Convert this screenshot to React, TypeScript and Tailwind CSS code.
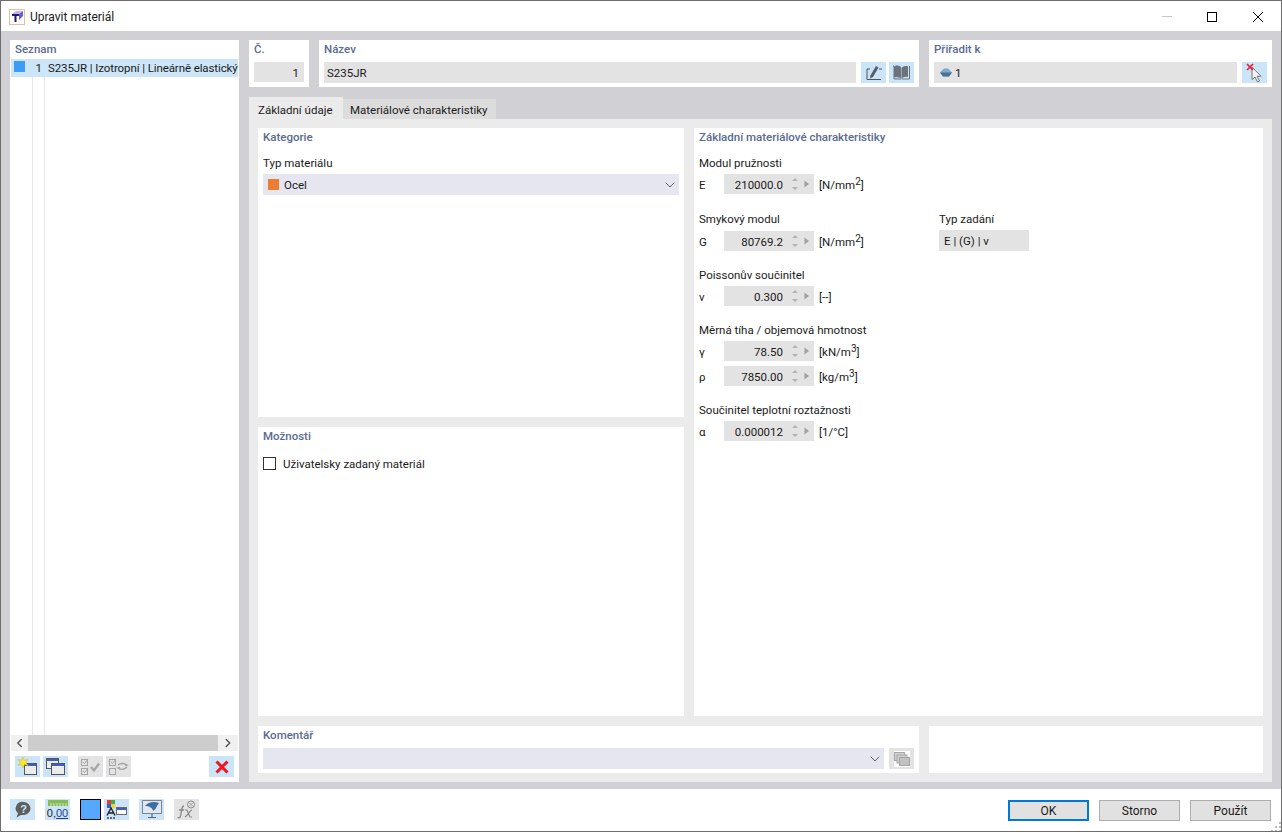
import type { ReactNode } from 'react'
import { ChevronDown, ChevronLeft, ChevronRight } from 'lucide-react'

const Title = ({ children }: { children: ReactNode }) => (
  <div className="h-[18px] leading-[19px] font-medium text-[#5b6a90]">{children}</div>
)

function IconBtn({ children, off }: { children: ReactNode; off?: boolean }) {
  return (
    <div className={`w-[25px] h-[21px] flex items-center justify-center shrink-0 ${off ? 'bg-[#e3e3e3]' : 'bg-[#cbe4f8]'}`}>
      {children}
    </div>
  )
}

function Spin({ value, symbol, unit }: { value: string; symbol: string; unit: ReactNode }) {
  return (
    <div className="flex items-center h-5">
      <span className="w-[25px] mt-px">{symbol}</span>
      <div className="w-[90px] h-5 bg-[#e3e3e3] flex items-center">
        <span className="w-[59px] text-right mt-px">{value}</span>
        <svg width="31" height="20" viewBox="0 0 31 20">
          <path d="M9 7l3-3 3 3zM9 13l3 3 3-3z" fill="#b4b4b4" />
          <path d="M21.500 6.500l4.500 3.500-4.500 3.500z" fill="#a0a0a0" />
        </svg>
      </div>
      <span className="ml-[5px] mt-px">{unit}</span>
    </div>
  )
}

const Sup = ({ children }: { children: ReactNode }) => (
  <span className="text-[10px] leading-none align-[4px]">{children}</span>
)

function TitleIcon() {
  return (
    <svg width="16" height="16" viewBox="0 0 16 16">
      <rect x="0.500" y="0.500" width="15" height="15" fill="#fff" stroke="#e0c39a" />
      <path d="M3 5l4-3h7l-4 3z" fill="#c2b4ee" />
      <path d="M10 5l4-3v5l-4 4z" fill="#6a5bd0" />
      <path d="M3 5h7v2H7.500v6h-2V7H3z" fill="#1c1c70" />
    </svg>
  )
}

function NewIcon() {
  return (
    <svg width="21" height="19" viewBox="0 0 21 19">
      <rect x="7.500" y="6.500" width="12" height="11" fill="#ececec" stroke="#555" />
      <rect x="8" y="7" width="11" height="2" fill="#3f5fc4" />
      <path d="M6 0l1.400 3.400L11 2.500 8.800 5.500 11 8.500 7.400 7.600 6 11 4.600 7.600 1 8.500 3.200 5.500 1 2.500l3.600.9z" fill="#f8ea2a" stroke="#c9b03a" strokeWidth="0.500" />
    </svg>
  )
}

function CopyIcon() {
  return (
    <svg width="21" height="19" viewBox="0 0 21 19">
      <rect x="1.500" y="1.500" width="12" height="10" fill="#ececec" stroke="#555" />
      <rect x="2" y="2" width="11" height="2" fill="#3f5fc4" />
      <rect x="6.500" y="6.500" width="13" height="11" fill="#ececec" stroke="#555" />
      <rect x="7" y="7" width="12" height="2" fill="#3f5fc4" />
    </svg>
  )
}

function CheckAllIcon() {
  return (
    <svg width="20" height="17" viewBox="0 0 20 17" fill="none" stroke="#a5a5a5">
      <rect x="0.500" y="1.500" width="6" height="6" />
      <rect x="0.500" y="10.500" width="6" height="6" />
      <path d="M2 4l1.500 1.500L7 1M2 13l1.500 1.500L7 10" />
      <path d="M10 9l3 3.500 5-7" strokeWidth="2.200" />
    </svg>
  )
}

function CheckSwapIcon() {
  return (
    <svg width="20" height="17" viewBox="0 0 20 17" fill="none" stroke="#a5a5a5">
      <rect x="0.500" y="1.500" width="6" height="6" />
      <rect x="0.500" y="10.500" width="6" height="6" />
      <path d="M2 4l1.500 1.500L7 1" />
      <path d="M9 7c3-2 6-2 9 0l-2 .5M18 9c-3 3-6 3-9 1l2-.5" strokeWidth="1.400" />
    </svg>
  )
}

function DeleteIcon() {
  return (
    <svg width="14" height="14" viewBox="0 0 14 14">
      <path d="M1.500 1.500l11 11M12.500 1.500l-11 11" stroke="#f0141e" strokeWidth="3" />
    </svg>
  )
}

function EditIcon() {
  return (
    <svg width="18" height="16" viewBox="0 0 18 16" fill="none">
      <path d="M5 4H2v10.500h14" stroke="#4b5560" />
      <path d="M11 1l2.500 1.500L8 12l-3 1.500.4-3z" fill="#56606c" />
      <path d="M14 4h3" stroke="#4b5560" />
    </svg>
  )
}

function BookIcon() {
  return (
    <svg width="17" height="15" viewBox="0 0 17 15">
      <path d="M0 1h1v13h7V2.500C6 .5 3 .5 1.500 1.500V12c2-.5 4-.2 5 .8" fill="none" stroke="#6a737c" />
      <path d="M2 1.500c2-.8 4-.5 6 1v10.500c-2-1-4-1.500-6-1z" fill="#6a737c" />
      <path d="M15 1.500c-2-.8-4-.5-6 1v10.500c2-1 4-1.500 6-1z" fill="#6a737c" />
      <path d="M16.500 1v13H9" fill="none" stroke="#6a737c" />
    </svg>
  )
}

function PickIcon() {
  return (
    <svg width="20" height="20" viewBox="0 0 20 20">
      <path d="M7 4v12.500l3-2.500 2.500 5 2-1-2.500-4.700h4z" fill="#f4f4f4" stroke="#777" />
      <path d="M2 1l6 6M8 1L2 7" stroke="#f01428" strokeWidth="1.500" />
    </svg>
  )
}

function SurfaceIcon() {
  return (
    <svg width="12" height="9" viewBox="0 0 12 9">
      <path d="M0 4.500L4 0.500h4l4 4-3 4H3z" fill="#7fa8d0" />
      <path d="M0 4.500L12 4.500 9 8.500H3z" fill="#4c7297" />
    </svg>
  )
}

function HelpIcon() {
  return (
    <svg width="18" height="17" viewBox="0 0 18 17">
      <path d="M9.500 1a7 6.500 0 0 1 0 13H7l-4.500 2.500L4 12.300A6.500 6.500 0 0 1 9.500 1z" fill="#5f5f5f" />
      <text x="9.500" y="11.500" textAnchor="middle" fontSize="11" fontWeight="700" fill="#cbe4f8" fontFamily="Liberation Sans, sans-serif">?</text>
    </svg>
  )
}

function UnitIcon() {
  return (
    <div className="w-[22px] flex flex-col items-center">
      <svg width="22" height="7" viewBox="0 0 22 7" className="block">
        <rect x="1" y="0" width="20" height="6" fill="#86bb5a" />
        <path d="M4 3v3M7 3v3M10 3v3M13 3v3M16 3v3M19 3v3" stroke="#d2e8c0" />
      </svg>
      <span className="text-[11px] leading-[12px] font-['Liberation_Sans',sans-serif] text-[#222]">
        0,<span className="underline text-[#1f3f8f]">00</span>
      </span>
    </div>
  )
}

function StyleIcon() {
  return (
    <svg width="21" height="19" viewBox="0 0 21 19">
      <rect x="1" y="0" width="4" height="4" fill="#e53a2f" />
      <rect x="5" y="0" width="4" height="4" fill="#3fae49" />
      <rect x="1" y="4" width="4" height="4" fill="#2f62d9" />
      <rect x="5" y="4" width="4" height="4" fill="#f2d431" />
      <path d="M1 15.500L5 8l4 7.500M2.500 13h5" fill="none" stroke="#222" strokeWidth="1.400" />
      <path d="M1 18h2M4 18h2M7 18h2" stroke="#444" strokeWidth="1.500" />
      <rect x="10.500" y="7.500" width="10" height="7" fill="#fff" stroke="#6a6a6a" />
      <rect x="11" y="8" width="9" height="2" fill="#3f5fc4" />
    </svg>
  )
}

function ViewIcon() {
  return (
    <svg width="20" height="19" viewBox="0 0 20 19">
      <rect x="0.500" y="0.500" width="19" height="13" fill="#dfe8f0" stroke="#7a8692" />
      <path d="M3 6c3-4 9-5 14-3l-2 3c-1 2-2 4-4 5 0-3-4-5-8-5z" fill="#3f6f9e" />
      <path d="M10 14v3M6 17.500h8" stroke="#5a6470" strokeWidth="1.200" />
    </svg>
  )
}

function FxIcon() {
  return (
    <svg width="21" height="19" viewBox="0 0 21 19" fill="none" stroke="#8b8b8b">
      <circle cx="15" cy="4.500" r="3.500" />
      <path d="M13 2.500l4 4M17 2.500l-4 4" strokeWidth="0.700" />
      <path d="M8 6C6 6 6 8 5.700 10L4.500 16C4 18 3 18 1.500 17.500M3 10h5" strokeWidth="1.300" />
      <path d="M9 10h2l3 7h2M16 10c-2 0-4 5-7 7" strokeWidth="1.200" />
    </svg>
  )
}

function CommentLibIcon() {
  return (
    <div className="w-[25px] h-[21px] bg-[#e3e3e3] flex items-center justify-center">
      <div className="w-4 h-4 bg-white flex items-center justify-center">
        <svg width="16" height="14" viewBox="0 0 16 14">
          <rect x="0.500" y="0.500" width="10" height="8" fill="#d0d0d0" stroke="#a5a5a5" />
          <rect x="3" y="3" width="10" height="8" fill="#d0d0d0" stroke="#a5a5a5" />
          <rect x="5.500" y="5.500" width="10" height="8" fill="#c2c2c2" stroke="#a5a5a5" />
        </svg>
      </div>
    </div>
  )
}

const DlgBtn = ({ label, primary }: { label: string; primary?: boolean }) => (
  <div className={`w-[81px] h-[21px] flex items-center justify-center bg-[#e1e1e1] text-[12px] ${primary ? 'border-2 border-[#0078d7]' : 'border border-[#adadad]'}`}>
    {label}
  </div>
)

export default function App() {
  return (
    <div className="w-[1282px] h-[832px] flex flex-col bg-white border border-[#6e6e6e] text-[11.5px] leading-4 text-[#1a1a1a] overflow-hidden font-['Roboto',sans-serif]">
      {/* Title bar */}
      <div className="h-[30px] shrink-0 flex items-center">
        <div className="ml-[8px] mt-[1px]"><TitleIcon /></div>
        <span className="ml-[5px] mt-[1px] text-[12px]">Upravit materiál</span>
        <div className="ml-auto flex items-center mr-[18px] mt-[1px]">
          <div className="w-[10px] h-px bg-[#c8c8c8]" />
          <div className="w-[10px] h-[10px] border border-black ml-[35px]" />
          <svg width="10" height="10" viewBox="0 0 10 10" className="ml-[36px]">
            <path d="M0 0l10 10M10 0L0 10" stroke="#000" strokeWidth="1" />
          </svg>
        </div>
      </div>

      {/* Body */}
      <div className="h-[758px] shrink-0 bg-[#d0d0d5] pl-[9px] pr-[9px] pt-[9px] pb-[7px] flex gap-[10px]">
        {/* Left list */}
        <div className="w-[229px] bg-white flex flex-col">
          <div className="h-[19px] pl-[5px] leading-[19px] font-medium text-[#5b6a90]">Seznam</div>
          <div className="flex-1 relative px-px min-h-0">
            <div className="absolute left-[22px] top-0 bottom-0 w-px bg-[#e8e8e8]" />
            <div className="absolute left-[34px] top-0 bottom-0 w-px bg-[#e8e8e8]" />
            <div className="h-[18px] bg-[#cde6f7] flex items-center overflow-hidden relative whitespace-nowrap">
              <div className="w-[11px] h-[11px] bg-[#3d9cf5] ml-[3px] shrink-0 -mt-[3px]" />
              <span className="w-[17px] text-right shrink-0">1</span>
              <span className="ml-[6px] tracking-[-0.1px]">S235JR | Izotropní | Lineárně elastický</span>
            </div>
          </div>
          <div className="h-4 mx-px bg-[#f0f0f0] flex items-center shrink-0">
            <ChevronLeft size={14} strokeWidth={2.500} className="text-[#555] w-[17px]" />
            <div className="w-[190px] h-4 bg-[#cdcdcd]" />
            <ChevronRight size={14} strokeWidth={2.500} className="text-[#555] w-[20px]" />
          </div>
          <div className="h-[31px] shrink-0 pl-[5px] pt-[5px] flex gap-[3px]">
            <IconBtn><NewIcon /></IconBtn>
            <IconBtn><CopyIcon /></IconBtn>
            <div className="ml-[7px]"><IconBtn off><CheckAllIcon /></IconBtn></div>
            <IconBtn off><CheckSwapIcon /></IconBtn>
            <div className="ml-[75px]"><IconBtn><DeleteIcon /></IconBtn></div>
          </div>
        </div>

        {/* Right side */}
        <div className="w-[1023px] flex flex-col">
          <div className="flex gap-[10px] h-[47px] shrink-0">
            <div className="w-[60px] bg-white px-[5px]">
              <div className="h-[22px] leading-[19px] font-medium text-[#5b6a90]">Č.</div>
              <div className="h-5 bg-[#e3e3e3] text-right pr-[5px] leading-[22px]">1</div>
            </div>
            <div className="w-[600px] bg-white px-[5px]">
              <div className="h-[22px] leading-[19px] font-medium text-[#5b6a90]">Název</div>
              <div className="flex">
                <div className="w-[532px] h-[21px] bg-[#e3e3e3] pl-[3px] leading-[23px]">S235JR</div>
                <div className="ml-[5px]"><IconBtn><EditIcon /></IconBtn></div>
                <div className="ml-[3px]"><IconBtn><BookIcon /></IconBtn></div>
              </div>
            </div>
            <div className="w-[343px] bg-white px-[5px]">
              <div className="h-[22px] leading-[19px] font-medium text-[#5b6a90]">Přiřadit k</div>
              <div className="flex">
                <div className="w-[303px] h-[21px] bg-[#e3e3e3] pl-[6px] flex items-center gap-[3px]">
                  <SurfaceIcon />
                  <span className="mt-px">1</span>
                </div>
                <div className="ml-[5px]"><IconBtn><PickIcon /></IconBtn></div>
              </div>
            </div>
          </div>

          {/* Tabs */}
          <div className="flex h-[22px] mt-[10px] shrink-0 items-end">
            <div className="w-[94px] h-[22px] bg-[#ebebeb] pl-[9px] leading-[27px]">Základní údaje</div>
            <div className="w-[153px] h-[20px] bg-[#dcdcdc] pl-[7px] leading-[23px]">Materiálové charakteristiky</div>
          </div>

          <div className="flex-1 bg-[#ebebeb] p-[9px] flex flex-col gap-[10px] min-h-0">
            <div className="flex-1 flex gap-[10px] min-h-0">
              <div className="w-[426px] flex flex-col gap-[10px]">
                <div className="flex-1 bg-white px-[5px]">
                  <Title>Kategorie</Title>
                  <div className="mt-[9px] h-4 leading-[17px]">Typ materiálu</div>
                  <div className="mt-[3px] w-[416px] h-[21px] bg-[#e6e6f0] flex items-center pl-[5px]">
                    <div className="w-[11px] h-[11px] bg-[#ed7d31]" />
                    <span className="ml-[5px]">Ocel</span>
                    <ChevronDown size={16} strokeWidth={1.250} className="ml-auto mr-[1px] text-[#444]" />
                  </div>
                </div>
                <div className="flex-1 bg-white px-[5px]">
                  <Title>Možnosti</Title>
                  <div className="mt-[12px] flex items-center h-[13px]">
                    <div className="w-[13px] h-[13px] border border-[#333] bg-white" />
                    <span className="ml-[7px]">Uživatelsky zadaný materiál</span>
                  </div>
                </div>
              </div>

              <div className="flex-1 bg-white px-[5px]">
                <Title>Základní materiálové charakteristiky</Title>
                <div className="mt-[9px] h-4 leading-[17px] mb-[3px]">Modul pružnosti</div>
                <Spin symbol="E" value="210000.0" unit={<>[N/mm<Sup>2</Sup>]</>} />

                <div className="mt-[17px] flex">
                  <div className="w-[240px]">
                    <div className="h-4 leading-[17px] mb-[4px]">Smykový modul</div>
                    <Spin symbol="G" value="80769.2" unit={<>[N/mm<Sup>2</Sup>]</>} />
                  </div>
                  <div>
                    <div className="h-4 leading-[17px] mb-[3px]">Typ zadání</div>
                    <div className="w-[90px] h-[21px] bg-[#e3e3e3] pl-[5px] leading-[23px]">E | (G) | ν</div>
                  </div>
                </div>

                <div className="mt-[16px] h-4 leading-[17px] mb-[3px]">Poissonův součinitel</div>
                <Spin symbol="ν" value="0.300" unit="[--]" />

                <div className="mt-[16px] h-4 leading-[17px] mb-[3px]">Měrná tíha / objemová hmotnost</div>
                <div className="flex flex-col gap-[5px]">
                  <Spin symbol="γ" value="78.50" unit={<>[kN/m<Sup>3</Sup>]</>} />
                  <Spin symbol="ρ" value="7850.00" unit={<>[kg/m<Sup>3</Sup>]</>} />
                </div>

                <div className="mt-[16px] h-4 leading-[17px] mb-[3px]">Součinitel teplotní roztažnosti</div>
                <Spin symbol="α" value="0.000012" unit="[1/°C]" />
              </div>
            </div>

            <div className="h-[47px] shrink-0 flex gap-[10px]">
              <div className="w-[661px] bg-white px-[5px]">
                <div className="h-[22px] leading-[19px] font-medium text-[#5b6a90]">Komentář</div>
                <div className="flex gap-[5px]">
                  <div className="w-[621px] h-[21px] bg-[#e6e6f0] flex items-center justify-end">
                    <ChevronDown size={16} strokeWidth={1.250} className="mr-[1px] text-[#444]" />
                  </div>
                  <CommentLibIcon />
                </div>
              </div>
              <div className="flex-1 bg-white" />
            </div>
          </div>
        </div>
      </div>

      {/* Footer */}
      <div className="flex-1 flex items-start pt-[10px] pl-[9px] pr-[10px] relative">
        <IconBtn><HelpIcon /></IconBtn>
        <div className="ml-[10px]"><IconBtn><UnitIcon /></IconBtn></div>
        <div className="ml-[10px] w-[21px] h-[21px] bg-[#55a8ff] border border-black" />
        <div className="ml-[3px]"><IconBtn><StyleIcon /></IconBtn></div>
        <div className="ml-[10px]"><IconBtn><ViewIcon /></IconBtn></div>
        <div className="ml-[10px]"><IconBtn off><FxIcon /></IconBtn></div>
        <div className="ml-auto flex gap-[10px] pt-px">
          <DlgBtn label="OK" primary />
          <DlgBtn label="Storno" />
          <DlgBtn label="Použít" />
        </div>
        <svg width="10" height="10" viewBox="0 0 10 10" className="absolute right-0 bottom-0">
          <path d="M8 1h2v2H8zM4 5h2v2H4zM8 5h2v2H8zM0 9h2v1H0zM4 9h2v1H4zM8 9h2v1H8z" fill="#b8b8b8" />
        </svg>
      </div>
    </div>
  )
}
